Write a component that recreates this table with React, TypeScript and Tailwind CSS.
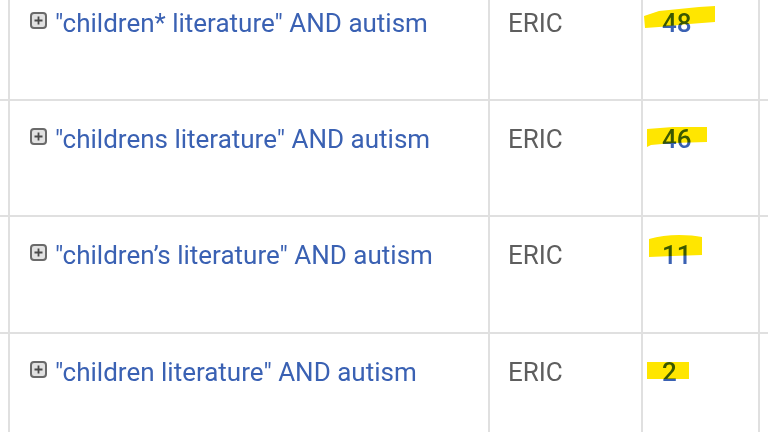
const rows = [
  {
    query: '"children* literature" AND autism',
    db: 'ERIC',
    hits: '48',
    h: 'h-[116px]',
    mark: 'M1 33 L16 28 L56 24 L72 23 L72 39 L46 41 L16 44 L2 45 Z',
  },
  {
    query: '"childrens literature" AND autism',
    db: 'ERIC',
    hits: '46',
    h: 'h-[116px]',
    mark: 'M4 30 L30 28 L64 28 L64 43 L30 44 L8 46 L4 48 Z',
  },
  {
    query: '"children\u2019s literature" AND autism',
    db: 'ERIC',
    hits: '11',
    h: 'h-[117px]',
    mark: 'M6 24 Q20 20 36 20 Q50 20 59 22 L59 40 L30 41 L6 42 Z',
  },
  {
    query: '"children literature" AND autism',
    db: 'ERIC',
    hits: '2',
    h: 'h-[117px]',
    mark: 'M4 30 L46 30 L46 47 L4 47 Z',
  },
];

const PlusBox = () => (
  <svg width="17" height="17" viewBox="0 0 17 17" className="shrink-0">
    <rect x="1" y="1" width="15" height="15" rx="3" fill="#e2e2e2" stroke="#6a6a6a" strokeWidth="2" />
    <path d="M8.5 4.5v8M4.5 8.5h8" stroke="#4a4a4a" strokeWidth="1.8" />
  </svg>
);

export default function App() {
  return (
    <div className="w-[768px] h-[432px] overflow-hidden bg-white font-['Roboto',sans-serif]">
      <div className="-mt-[15px]">
        {rows.map((r) => (
          <div key={r.hits} className={`flex ${r.h} border-b-2 border-[#e0e0e0]`}>
            <div className="w-[10px] border-r-2 border-[#e0e0e0]" />
            <div className="w-[480px] border-r-2 border-[#e0e0e0] flex items-start gap-[8px] pl-[20px] pt-[23px]">
              <div className="pt-[4px]">
                <PlusBox />
              </div>
              <span className="text-[26px] leading-[30px] text-[#3a61b3]">{r.query}</span>
            </div>
            <div className="w-[153px] border-r-2 border-[#e0e0e0] pl-[18px] pt-[23px]">
              <span className="text-[26px] leading-[30px] text-[#5e5e5e]">{r.db}</span>
            </div>
            <div className="relative w-[117px] border-r-2 border-[#e0e0e0] pl-[19px] pt-[23px]">
              <span className="text-[26px] leading-[30px] font-medium text-[#3a61b3]">{r.hits}</span>
              <svg
                width="117"
                height="60"
                viewBox="0 0 117 60"
                className="absolute left-0 top-[-2px] mix-blend-multiply"
              >
                <path d={r.mark} fill="#ffe600" />
              </svg>
            </div>
            <div className="flex-1" />
          </div>
        ))}
      </div>
    </div>
  );
}
